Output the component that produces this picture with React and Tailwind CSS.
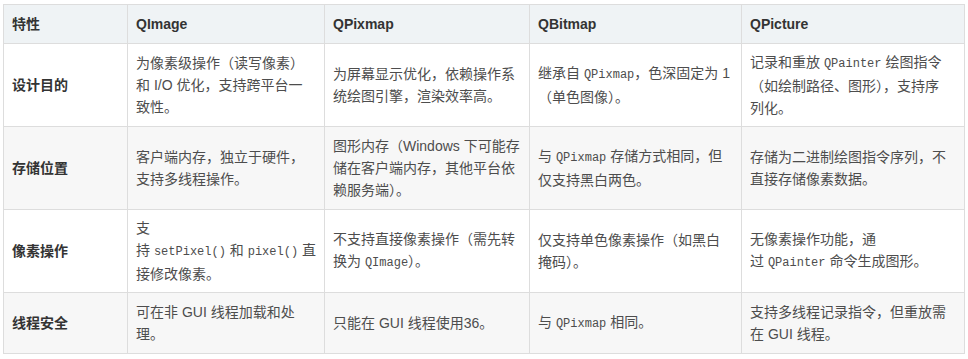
const columns = ["特性", "QImage", "QPixmap", "QBitmap", "QPicture"];
const widths = ["w-[124px]", "w-[197px]", "w-[205px]", "w-[212px]", "w-[223px]"];

// each cell: list of lines, `code` parts in backticks
const rows = [
  {
    label: "设计目的",
    height: "h-[83px]",
    bg: "bg-white",
    cells: [
      ["为像素级操作（读写像素）", "和 I/O 优化，支持跨平台一", "致性。"],
      ["为屏幕显示优化，依赖操作系", "统绘图引擎，渲染效率高。"],
      ["继承自 `QPixmap`，色深固定为 1", "（单色图像）。"],
      ["记录和重放 `QPainter` 绘图指令", "（如绘制路径、图形），支持序", "列化。"],
    ],
  },
  {
    label: "存储位置",
    height: "h-[83px]",
    bg: "bg-[#f7f7f7]",
    cells: [
      ["客户端内存，独立于硬件，", "支持多线程操作。"],
      ["图形内存（Windows 下可能存", "储在客户端内存，其他平台依", "赖服务端）。"],
      ["与 `QPixmap` 存储方式相同，但", "仅支持黑白两色。"],
      ["存储为二进制绘图指令序列，不", "直接存储像素数据。"],
    ],
  },
  {
    label: "像素操作",
    height: "h-[83px]",
    bg: "bg-white",
    cells: [
      ["支", "持 `setPixel()` 和 `pixel()` 直", "接修改像素。"],
      ["不支持直接像素操作（需先转", "换为 `QImage`）。"],
      ["仅支持单色像素操作（如黑白", "掩码）。"],
      ["无像素操作功能，通", "过 `QPainter` 命令生成图形。"],
    ],
  },
  {
    label: "线程安全",
    height: "h-[61px]",
    bg: "bg-[#f7f7f7]",
    cells: [
      ["可在非 GUI 线程加载和处", "理。"],
      ["只能在 GUI 线程使用36。"],
      ["与 `QPixmap` 相同。"],
      ["支持多线程记录指令，但重放需", "在 GUI 线程。"],
    ],
  },
];

function Line({ text }) {
  const parts = text.split("`");
  return (
    <div className="whitespace-nowrap">
      {parts.map((part, i) =>
        i % 2 === 1 ? (
          <code
            key={i}
            className="font-['Liberation_Mono',monospace] text-[12px]"
          >
            {part}
          </code>
        ) : (
          <span key={i}>{part}</span>
        )
      )}
    </div>
  );
}

export default function App() {
  return (
    <div className="bg-white pl-[3px] pt-[4px] font-['Liberation_Sans','Noto_Sans_CJK_SC',sans-serif] text-[14px] leading-[22px] text-[#4d4d4d]">
      <table className="table-fixed border-collapse w-[962px]">
        <thead>
          <tr className="h-[39px] bg-[#eff3f5]">
            {columns.map((col, i) => (
              <th
                key={col}
                className={`${widths[i]} border border-[#dddddd] px-2 text-left align-middle font-bold text-[#333333]`}
              >
                {col}
              </th>
            ))}
          </tr>
        </thead>
        <tbody>
          {rows.map((row) => (
            <tr key={row.label} className={`${row.height} ${row.bg}`}>
              <td className="border border-[#dddddd] px-2 align-middle font-bold text-[#333333]">
                {row.label}
              </td>
              {row.cells.map((lines, i) => (
                <td key={i} className="border border-[#dddddd] px-2 align-middle">
                  {lines.map((line, j) => (
                    <Line key={j} text={line} />
                  ))}
                </td>
              ))}
            </tr>
          ))}
        </tbody>
      </table>
    </div>
  );
}
